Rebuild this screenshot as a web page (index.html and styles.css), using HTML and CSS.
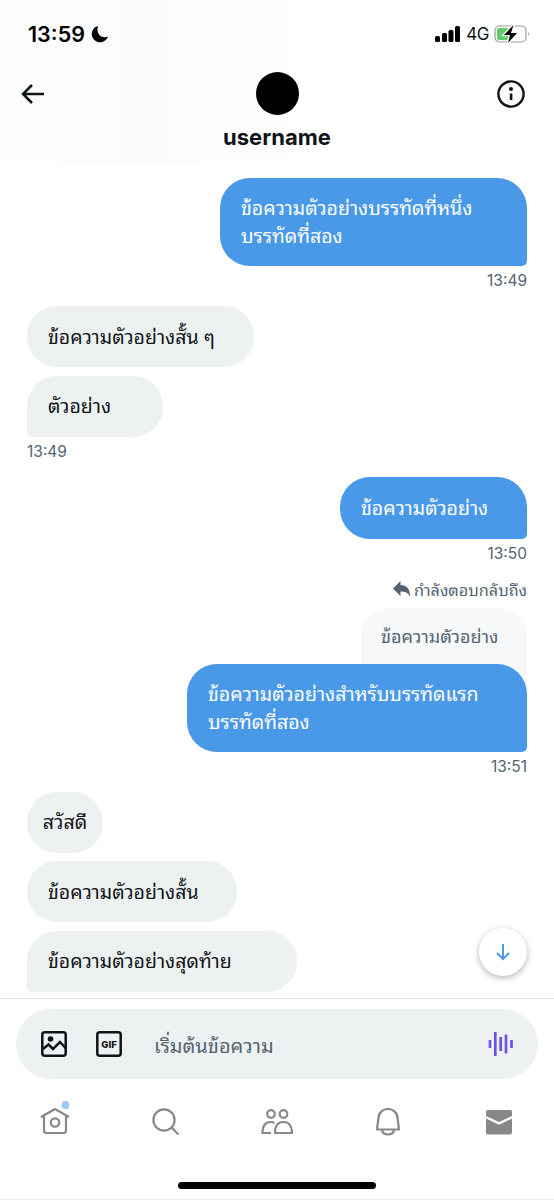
FILE: index.html
```html
<!DOCTYPE html>
<html lang="th">
<head>
<meta charset="utf-8">
<title>Messages</title>
<link rel="stylesheet" href="styles.css">
</head>
<body>
<div class="screen">
  <header class="header">
    <div class="status">
      <div class="clock">13:59
        <svg width="18" height="18" viewBox="0 0 18 18"><path d="M7 1A8.300 8.300 0 1 0 17 11.500C11 14 4.500 9 7 1Z" fill="#000"/></svg>
      </div>
      <div class="signals">
        <svg width="26" height="16" viewBox="0 0 26 16"><rect x="0" y="10" width="5" height="6" rx="1.500"/><rect x="7" y="7" width="5" height="9" rx="1.500"/><rect x="13.500" y="4" width="5" height="12" rx="1.500"/><rect x="20" y="0" width="5" height="16" rx="1.500"/></svg>
        <span class="network">4G</span>
        <svg width="36" height="20" viewBox="0 0 36 20"><rect x="1" y="2" width="31" height="16" rx="4.500" fill="none" stroke="#999" stroke-width="1.200"/><path d="M5 4h12v12H5a2 2 0 0 1-2-2V6a2 2 0 0 1 2-2Z" fill="#65cc6c"/><path d="M34 8v4q2-2 0-4Z" fill="#999"/><path d="M19.500 1 10 11h6l-2 8 9-10h-6Z" fill="#000" stroke="#fff" stroke-width="2.600" paint-order="stroke"/></svg>
      </div>
    </div>
    <div class="titlebar">
      <svg width="24" height="24" viewBox="0 0 24 24" fill="none" stroke="#0f1419" stroke-width="2.500"><path d="M23 12H2M11 3l-9 9 9 9"/></svg>
      <div class="avatar"></div>
      <svg class="info" width="28" height="28" viewBox="0 0 28 28"><circle cx="14" cy="14" r="12.600" fill="none" stroke="#0f1419" stroke-width="2.400"/><circle cx="14" cy="9" r="2" fill="#0f1419"/><path d="M12.800 13.500h2.600V20h-2.600Z" fill="#0f1419"/></svg>
    </div>
    <div class="name">username</div>
  </header>

  <main class="chat">
    <div class="bubble sent tail two w307">ข้อความตัวอย่างบรรทัดที่หนึ่ง<br>บรรทัดที่สอง</div>
    <div class="time right">13:49</div>
    <div class="bubble received w227">ข้อความตัวอย่างสั้น ๆ</div>
    <div class="bubble received tail w136">ตัวอย่าง</div>
    <div class="time">13:49</div>
    <div class="bubble sent tail w187">ข้อความตัวอย่าง</div>
    <div class="time right short">13:50</div>
    <div class="replying"><svg width="18" height="16" viewBox="0 0 18 16"><path d="M7.500 0v4C14 4 17 8 17 15.500 15 11.500 12 10.500 7.500 10.500v4.500L0 7.500Z" fill="#536471"/></svg>กำลังตอบกลับถึง</div>
    <div class="quote">ข้อความตัวอย่าง</div>
    <div class="bubble sent tail two over w340">ข้อความตัวอย่างสำหรับบรรทัดแรก<br>บรรทัดที่สอง</div>
    <div class="time right">13:51</div>
    <div class="bubble received w76">สวัสดี</div>
    <div class="bubble received w210">ข้อความตัวอย่างสั้น</div>
    <div class="bubble received tail w270">ข้อความตัวอย่างสุดท้าย</div>
    <div class="jump"><svg width="16" height="18" viewBox="0 0 16 18" fill="none" stroke="#4a99e9" stroke-width="2"><path d="M8 1v15M2 10l6 6 6-6"/></svg></div>
  </main>

  <section class="composer">
    <div class="field">
      <svg width="26" height="26" viewBox="0 0 26 26" fill="none" stroke="#0f1419" stroke-width="2.500"><rect x="1.300" y="1.300" width="23.400" height="23.400" rx="2.500"/><circle cx="9.500" cy="8" r="2.800" fill="#0f1419" stroke="none"/><path d="m2 18 5.500-4.500L12 18l7-7 6 6.500"/></svg>
      <svg class="gif" width="26" height="26" viewBox="0 0 26 26"><rect x="1.300" y="1.300" width="23.400" height="23.400" rx="2.500" fill="none" stroke="#0f1419" stroke-width="2.500"/><text x="13" y="16.800" text-anchor="middle" class="giftext">GIF</text></svg>
      <span class="placeholder">เริ่มต้นข้อความ</span>
      <svg width="26" height="26" viewBox="0 0 26 26" stroke="#6f54e0" stroke-width="2.700"><path d="M2 9v8M7.300 1v24M12.700 6v14M18 3.500v19M23.500 9v8"/></svg>
    </div>
  </section>

  <nav class="tabs">
    <div class="tab"><svg width="32" height="36" viewBox="0 0 32 36" fill="none" stroke="#86888a" stroke-width="2.200"><path d="M2 18 16 10l14 8M5 16v15.500q0 2.500 2.500 2.500h17q2.500 0 2.500-2.500V16"/><circle cx="16" cy="23.500" r="4.200"/><circle cx="26.500" cy="6" r="4" fill="#9cc8f2" stroke="none"/></svg></div>
    <div class="tab"><svg width="28" height="28" viewBox="0 0 28 28" fill="none" stroke="#86888a" stroke-width="2.200"><circle cx="12" cy="12" r="10.600"/><path d="m19.500 19.500 7 7"/></svg></div>
    <div class="tab"><svg width="32" height="26" viewBox="0 0 32 26" fill="none" stroke="#86888a" stroke-width="2.200"><circle cx="10" cy="5" r="3.800"/><circle cx="22.500" cy="5" r="3.800"/><path d="M10 24H1.500q0-11 8.500-11 2 0 3.500 1M14 24q0-11 8.500-11T31 24Z"/></svg></div>
    <div class="tab"><svg width="26" height="28" viewBox="0 0 26 28" fill="none" stroke="#86888a" stroke-width="2.200"><path d="M2 21.500 3.500 10a9.500 9 0 0 1 19 0L24 21.500ZM7 22c1 6 11 6 12 0"/></svg></div>
    <div class="tab"><svg width="28" height="26" viewBox="0 0 28 26" fill="#86888a"><path d="M2.500 1h23Q27 1 27 2.500V7l-13 6L1 7V2.500Q1 1 2.500 1ZM1 9.500l13 6.300 13-6.300v14q0 2-2 2H3q-2 0-2-2Z"/></svg></div>
  </nav>
  <div class="home-bar"></div>
</div>
</body>
</html>
```
FILE: styles.css
```css
* { box-sizing: border-box; }
body { margin: 0; background: #fff; color: #0f1419; font-family: Inter, "Noto Sans Thai Looped", "Noto Looped Thai", Loma, Garuda, "Noto Sans", sans-serif; }
svg { display: block; flex: none; }
.screen { width: 554px; height: 1200px; display: flex; flex-direction: column; overflow: hidden; border-bottom: 1px solid #eee; }
.header { height: 163px; flex: none; background: linear-gradient(90deg, #fdfdfe, #fafbfc 28%, #fff 55%); }
.status { height: 67px; padding: 0 24px 0 28px; display: flex; align-items: center; justify-content: space-between; }
.clock { display: flex; align-items: center; gap: 6px; font-size: 21.5px; font-weight: 600; color: #000; }
.signals { display: flex; align-items: center; gap: 5px; }
.network { font-size: 17px; letter-spacing: -0.5px; }
.titlebar { height: 53px; padding: 0 29px 0 21px; display: grid; grid-template-columns: 80px 1fr 72px; align-items: center; }
.avatar { width: 43px; height: 43px; justify-self: center; border-radius: 50%; background: #000; }
.info { justify-self: end; }
.name { height: 34px; line-height: 34px; text-align: center; font-size: 22px; font-weight: 700; }
.chat { position: relative; height: 835px; flex: none; padding: 15px 27px 0; display: flex; flex-direction: column; align-items: flex-start; }
.bubble { height: 61px; flex: none; padding: 0 21px; margin-bottom: 8.500px; border-radius: 30px; display: flex; align-items: center; font-size: 19.5px; line-height: 28px; white-space: nowrap; }
.received { background: #eef1f2; }
.sent { align-self: flex-end; background: #4a99e9; color: #fff; height: 62px; }
.received.tail { border-bottom-left-radius: 5px; }
.sent.tail { border-bottom-right-radius: 5px; }
.bubble.tail { margin-bottom: 5px; }
.two { height: 88px; }
.w307 { width: 307px; }
.w227 { width: 227px; }
.w136 { width: 136px; }
.w187 { width: 187px; }
.w340 { width: 340px; }
.w76 { width: 76px; padding: 0; justify-content: center; }
.w210 { width: 210px; }
.w270 { width: 270px; }
.time { height: 20px; flex: none; margin-bottom: 15px; font-size: 15.500px; line-height: 20px; color: #536471; }
.time.right { align-self: flex-end; }
.time.short { margin-bottom: 13px; }
.replying { align-self: flex-end; height: 24px; margin-bottom: 7px; display: flex; align-items: center; gap: 3px; font-size: 16.300px; color: #536471; }
.quote { align-self: flex-end; width: 166px; height: 82px; flex: none; padding: 14px 20px; border-radius: 28px 28px 0 0; background: #f7f8f9; color: #536471; font-size: 18px; line-height: 29px; white-space: nowrap; }
.over { margin-top: -26px; position: relative; }
.jump { position: absolute; right: 27px; top: 765px; width: 48px; height: 48px; border-radius: 50%; background: #fff; box-shadow: 0 2px 6px rgba(0, 0, 0, .3); display: flex; align-items: center; justify-content: center; }
.composer { height: 81px; flex: none; padding: 10px 16px 0; border-top: 1px solid #e1e5e7; }
.field { height: 70px; border-radius: 35px; background: #eef1f2; padding: 0 24px 0 25px; display: flex; align-items: center; }
.gif { margin-left: 29px; }
.giftext { font: 800 9.5px Inter, sans-serif; fill: #0f1419; }
.placeholder { flex: 1; margin-left: 32px; font-size: 20px; color: #536471; }
.tabs { height: 86px; flex: none; display: grid; grid-template-columns: repeat(5, 1fr); align-items: center; }
.tab { display: flex; justify-content: center; }
.tab:first-child svg { margin-top: -10px; }
.home-bar { width: 198px; height: 7px; margin: 17px auto 0; border-radius: 4px; background: #000; }
```
